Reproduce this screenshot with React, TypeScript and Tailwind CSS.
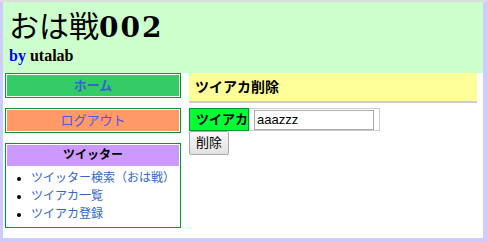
import React from 'react';

const ui = { fontFamily: '"Liberation Sans", "Noto Sans CJK JP", sans-serif' };
const serif = { fontFamily: '"Liberation Serif", "Noto Sans CJK JP", serif' };
const digits = { fontFamily: '"DejaVu Serif", serif' };

const links = ['ツイッター検索（おは戦）', 'ツイアカ一覧', 'ツイアカ登録'];

export default function App() {
  return (
    <div className="min-h-screen bg-[#ccccff]" style={ui}>
      <div className="h-[2px] bg-[#dddddd]" />
      <div className="ml-[3px] mr-[4px] h-[236px] bg-white">
        {/* Header */}
        <div className="h-[71px] bg-[#ccffcc] pl-[6px] pt-[9px]" style={serif}>
          <h1 className="text-[30px] leading-[32px] text-black">
            <span className="font-normal">おは戦</span>
            <span className="text-[28px] font-bold tracking-[2px]" style={digits}>002</span>
          </h1>
          <p className="mt-[2px] text-[16px] font-bold leading-[20px]">
            <span className="text-[#0000ff]">by</span> <span className="text-black">utalab</span>
          </p>
        </div>

        <div className="flex">
          {/* Sidebar */}
          <div className="ml-[2px] flex w-[176px] flex-col gap-[10px]">
            <div className="border border-[#009933] p-[1px]">
              <a className="block h-[21px] bg-[#33cc66] text-center text-[13px] font-bold leading-[21px] text-[#3366cc]">
                ホーム
              </a>
            </div>
            <div className="border border-[#009933] p-[1px]">
              <a className="block h-[21px] bg-[#ff9966] text-center text-[13px] leading-[21px] text-[#5555ee]">
                ログアウト
              </a>
            </div>
            <div className="border border-[#009933] p-[1px]">
              <div className="h-[21px] bg-[#cc99ff] text-center text-[12px] font-bold leading-[21px] text-black">
                ツイッター
              </div>
              <ul className="my-[3px] list-disc pl-[24px] text-[12px] leading-[18px]">
                {links.map((l) => (
                  <li key={l} className="marker:text-black">
                    <a className="text-[#3366cc]">{l}</a>
                  </li>
                ))}
              </ul>
            </div>
          </div>

          {/* Main */}
          <div className="ml-[8px] mr-[6px] flex-1">
            <div className="h-[30px] border-b-2 border-[#cccccc] bg-[#ffff99] pl-[6px] text-[14px] font-bold leading-[28px] text-black">
              ツイアカ削除
            </div>
            <div className="mt-[5px] flex">
              <div className="h-[23px] w-[60px] border border-[#009933] bg-[#00ff33] pl-[6px] text-[13px] font-bold leading-[21px] text-black">
                ツイアカ
              </div>
              <div className="flex h-[23px] w-[131px] items-center border border-[#cccccc] pl-[4px] pr-[5px]">
                <input
                  className="h-[20px] w-full border border-[#aaaaaa] px-[2px] text-[13px] text-black outline-none"
                  defaultValue="aaazzz"
                />
              </div>
            </div>
            <button className="flex h-[24px] w-[40px] items-center justify-center rounded-[2px] border border-[#aaaaaa] bg-gradient-to-b from-[#f8f8f8] to-[#e2e2e2] text-[13px] text-black">
              削除
            </button>
          </div>
        </div>
      </div>
    </div>
  );
}
